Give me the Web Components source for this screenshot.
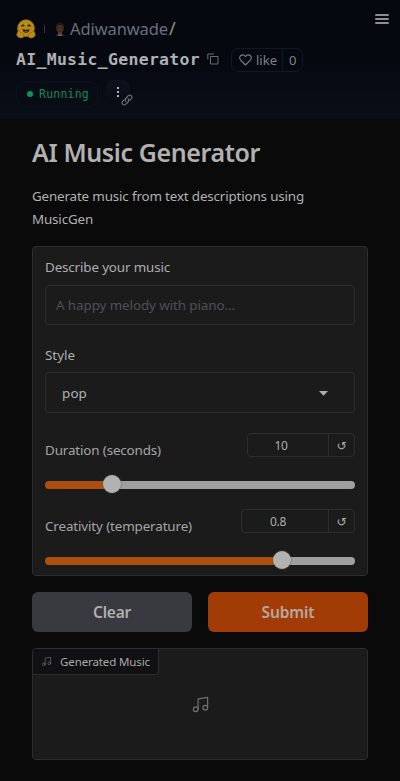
<!DOCTYPE html>
<html lang="en">
<head>
<meta charset="utf-8">
<title>AI Music Generator</title>
<style>
html{background:#0a0a0b}
body{margin:0;background:#0a0a0b;font-family:"Noto Sans",sans-serif;color:#b3b3b4;overflow:hidden}
</style>
</head>
<body>
<music-app></music-app>
<script>
const define = (name, html, setup) => customElements.define(name, class extends HTMLElement {
  connectedCallback() {
    if (this.shadowRoot) return;
    const root = this.attachShadow({mode: 'open'});
    root.innerHTML = html;
    if (setup) setup(this, root);
  }
});

// Text whose tracking adjusts so that it fills the width in its w attribute.
define('fit-text', `<style>
  :host{display:block;white-space:nowrap;flex:none}
  span{display:inline-block}
</style><span><slot></slot></span>`, (el, root) => {
  const w = +el.getAttribute('w'), s = root.querySelector('span');
  el.style.width = w + 'px';
  s.style.letterSpacing = (w - s.getBoundingClientRect().width) / el.textContent.length + 'px';
});

define('note-icon', `<style>:host{display:block;flex:none}svg{display:block;width:100%;height:100%}</style>
<svg viewBox="0 0 24 24" fill="none" stroke="currentColor" stroke-width="1.5" stroke-linecap="round" stroke-linejoin="round"><path d="M9 18V5l12-2v13"/><circle cx="6" cy="18" r="3"/><circle cx="18" cy="16" r="3"/></svg>`);

define('hub-logo', `<style>:host{display:block;width:20px;height:20px;flex:none}svg{display:block;overflow:visible}</style>
<svg width="20" height="20" viewBox="0 0 20 20">
<circle cx="10" cy="9.2" r="8.4" fill="#b78c16" stroke="#a06f0c" stroke-width=".8"/>
<path d="M5.8 7q1.200-1.400 2.200-.2M12 6.800q1.200-1.200 2.200.2" fill="none" stroke="#2b210f" stroke-width="1.300" stroke-linecap="round"/>
<path d="M6.500 10q3.500 1.400 7 0q-.3 3.800-3.500 3.800t-3.500-3.800" fill="#32200f"/><path d="M8 12.600q2-1.600 4 0q-2 1.600-4 0" fill="#a72e2c"/>
<path d="M2 12.300q1.200-.4 2 1l1.700.2q2.500 1.200 2.200 3.600q-.5 2.200-3.500 1.800Q1 18.500.7 15.500z" fill="#b98c18" stroke="#996409" stroke-width=".7"/>
<path d="M18 12.300q-1.200-.4-2 1l-1.700.2q-2.500 1.200-2.200 3.600q.5 2.200 3.500 1.800q3.400-.4 3.700-3.400z" fill="#b98c18" stroke="#996409" stroke-width=".7"/>
</svg>`);

define('user-avatar', `<style>:host{display:block;width:14px;height:14px;flex:none}svg{display:block}</style>
<svg width="14" height="14" viewBox="0 0 14 14"><path d="M2.500 14q.5-2.400 3-2.800h3q2.500.4 3 2.800z" fill="#23262b"/><path d="M5 9h4v3.500L7 13.600l-2-1.100z" fill="#55402f"/><ellipse cx="7" cy="6" rx="3.700" ry="5" fill="#493123"/><path d="M3.200 5Q3 .5 7 .4t3.800 4.600Q9.500 3 7 3T3.200 5" fill="#24180f"/><path d="M4.600 5.800h1.600M7.800 5.800h1.600M5.600 9h2.800" stroke="#2c1c14"/><path d="M5 13.300h4" stroke="#777"/></svg>`);

define('space-header', `<style>
  :host{display:block;box-sizing:border-box;height:119px;padding:17px 11px 0 16px;background:linear-gradient(#05080e,#05080f 50%,#0a0e18)}
  .row{display:flex;align-items:center}
  .one{height:23px}
  .sep{width:1px;height:8px;background:#34373d;margin:0 8px 0 8px}
  .owner{font-size:16.500px;line-height:23px;color:#68707d;margin-left:3px;margin-top:-1px}
  .slash{font-size:18px;line-height:23px;color:#8e9094;margin:-1px 0 0 1px}
  .menu{margin:-19px 0 0 auto;display:grid;gap:2px}
  .menu i{width:14px;height:2px;background:#8b8d90;border-radius:1px}
  .two{height:24px;margin-top:8px}
  .name{font:bold 16.500px/24px "DejaVu Sans Mono",monospace;color:#aeb0b4}
  .copy{margin:-2px 0 0 7px;display:block}
  .like{box-sizing:border-box;display:flex;align-items:center;width:72px;height:24px;border:1px solid #101725;border-radius:7px;margin-left:12px;color:#7d828c;font-size:13px}
  .like svg{margin:0 4px 0 7px}
  .count{display:flex;align-items:center;justify-content:center;height:22px;flex:1;border-left:1px solid #101725;margin-left:5px}
  .three{height:26px;margin-top:9px}
  .run{box-sizing:border-box;display:flex;align-items:center;width:82px;height:26px;border:1px solid #0d121d;border-radius:9px;background:#080c15;padding-left:10px;color:#0b8b5c;font:11.500px/24px "DejaVu Sans Mono",monospace}
  .dot{width:6px;height:6px;border-radius:50%;background:#079562;margin-right:6px}
  .more{position:relative;width:24px;height:24px;border-radius:8px;background:linear-gradient(#0d121d,#080c14);margin:-4px 0 0 8px;display:grid;place-content:center;gap:2px}
  .more i{width:2px;height:2px;background:#b0b2b5}
  .link{position:absolute;left:14.500px;top:14px}
</style>
<div class="row one"><hub-logo></hub-logo><span class="sep"></span><user-avatar></user-avatar><fit-text class="owner" w="98">Adiwanwade</fit-text><span class="slash">/</span><div class="menu"><i></i><i></i><i></i></div></div>
<div class="row two"><fit-text class="name" w="184">AI_Music_Generator</fit-text>
<svg class="copy" width="12" height="12" fill="none" stroke="#6a6d74"><path d="M3.500 3.500h7.500v7.500h-7.500zM.8 6.500v-5.500h6.200"/></svg>
<div class="like"><svg width="13" height="12" viewBox="0 0 13 12" fill="none" stroke="#7d828c" stroke-width="1.100"><path d="M6.500 11 1.600 6.200Q-.2 3.500 1.600 1.700 4.200-.2 6.500 2.500 8.800-.2 11.400 1.700 13.200 3.500 11.400 6.200z"/></svg><fit-text w="21">like</fit-text><span class="count"><fit-text w="7">0</fit-text></span></div></div>
<div class="row three"><div class="run"><span class="dot"></span><fit-text w="50">Running</fit-text></div>
<div class="more"><i></i><i></i><i></i><svg class="link" width="12" height="12" viewBox="0 0 12 12" fill="none" stroke="#73767d" stroke-width="1.100" stroke-linecap="round"><path d="M5 7.300Q3.500 5.600 5 4l2.300-2.300q1.500-1.300 3 0 1.300 1.500 0 3L8.900 6.100M7 4.700Q8.500 6.400 7 8L4.700 10.300q-1.500 1.300-3 0-1.300-1.500 0-3L3.100 5.900"/></svg></div></div>`);

define('text-field', `<style>
  :host{display:block}
  .label{font-size:13.400px;line-height:20px;color:#adadae}
  .box{box-sizing:border-box;height:40px;border:1px solid #2d2d30;border-radius:4px;margin-top:8px;padding:0 10px;display:flex;align-items:center;font-size:13.400px;color:#505054}
</style><div class="label"><slot name="label"></slot></div><div class="box"><slot></slot></div>`);

define('select-field', `<style>
  :host{display:block}
  .label{font-size:13.400px;line-height:20px;color:#adadae}
  .box{box-sizing:border-box;height:41px;border:1px solid #2d2d30;border-radius:4px;margin-top:7px;padding:0 26px 0 16px;display:flex;align-items:center;justify-content:space-between;font-size:13.400px;color:#b2b2b3}
  svg{margin-top:2px}
</style><div class="label"><slot name="label"></slot></div><div class="box"><slot></slot><svg width="9" height="5"><path d="M0 0h9L4.500 4.800z" fill="#adadae"/></svg></div>`);

define('range-field', `<style>
  :host{display:block;height:57px}
  .head{display:flex;justify-content:space-between;align-items:flex-start;height:48px}
  .label{font-size:13.400px;line-height:20px;color:#a5a5a6;padding-top:7px}
  .num{box-sizing:border-box;display:flex;height:24px;border:1px solid #2d2d30;border-radius:4px;font-size:12px;line-height:24px;color:#aeaeaf}
  .val{display:flex;justify-content:center;box-sizing:border-box;padding-right:14px;height:22px}
  .reset{box-sizing:border-box;height:22px;width:26px;border-left:1px solid #2d2d30;text-align:center;font:12px/25px "DejaVu Sans",sans-serif}
  .track{height:8px;border-radius:4px;display:flex;align-items:center}
  .thumb{width:18px;height:18px;border-radius:50%;background:#b2b2b3;box-shadow:0 0 2px #555;margin-top:-2px}
</style>
<div class="head"><div class="label"><slot></slot></div><div class="num"><div class="val"><fit-text></fit-text></div><div class="reset">↺</div></div></div>
<div class="track"><div class="thumb"></div></div>`, (el, root) => {
  const at = el.getAttribute('at');
  root.querySelector('.val').style.width = el.getAttribute('boxw') - 28 + 'px';
  root.querySelector('.track').style.background = `linear-gradient(90deg,#ad500f ${at}px,#9f9fa0 ${at}px)`;
  root.querySelector('.thumb').style.marginLeft = at - 9 + 'px';
  const t = document.createElement('fit-text');
  t.setAttribute('w', el.getAttribute('valw'));
  t.textContent = el.getAttribute('value');
  root.querySelector('fit-text').replaceWith(t);
});

define('form-panel', `<style>:host{display:block;box-sizing:border-box;height:330px;border:1px solid #2d2d30;border-radius:4px;background:#1b1b1c;padding:10px 12px}</style><slot></slot>`);

define('action-button', `<style>
  :host{display:flex;align-items:center;justify-content:center;height:40px;border-radius:6px;background:#393a3f;color:#b0b0b1;font-weight:600;font-size:15.500px}
  :host([primary]){background:#a13c07;color:#b5a8a1}
</style><slot></slot>`);

define('audio-panel', `<style>
  :host{display:flex;position:relative;box-sizing:border-box;height:112px;border:1px solid #2d2d30;border-radius:4px;background:#1b1b1c;align-items:center;justify-content:center;color:#707073}
  .tag{position:absolute;left:0;top:0;box-sizing:border-box;display:flex;align-items:center;width:126px;height:26px;background:#111113;border:solid #2d2d30;border-width:0 1px 1px 0;border-radius:3px 0 4px 0;padding-left:8px;gap:8px;font-size:11.500px}
  .tag note-icon{width:11px;height:11px}
  .tag span{color:#a9a9aa}
  .big{width:19px;height:19px}
</style><div class="tag"><note-icon></note-icon><span><slot></slot></span></div><note-icon class="big"></note-icon>`);

define('music-app', `<style>
  :host{display:block;height:781px}
  main{padding:0 32px}
  h1{margin:0;padding-top:15px;font-size:25px;line-height:36px;font-weight:600;color:#b1b1b2}
  p{margin:15px 0 15px;font-size:13.400px;line-height:23px;color:#b1b1b2}
  text-field{margin-bottom:20px}
  select-field{margin-bottom:20px}
  range-field + range-field{margin-top:19px}
  .buttons{display:grid;grid-template-columns:1fr 1fr;gap:16px;margin:16px 0}
</style>
<space-header></space-header>
<main>
<h1><fit-text w="228">AI Music Generator</fit-text></h1>
<p><fit-text w="272">Generate music from text descriptions using</fit-text><fit-text w="61">MusicGen</fit-text></p>
<form-panel>
<text-field><fit-text slot="label" w="125">Describe your music</fit-text><fit-text w="179">A happy melody with piano...</fit-text></text-field>
<select-field><fit-text slot="label" w="30">Style</fit-text><fit-text w="25">pop</fit-text></select-field>
<range-field at="67" boxw="108" value="10" valw="13"><fit-text w="116">Duration (seconds)</fit-text></range-field>
<range-field at="237" boxw="114" value="0.8" valw="16"><fit-text w="147">Creativity (temperature)</fit-text></range-field>
</form-panel>
<div class="buttons"><action-button><fit-text w="38">Clear</fit-text></action-button><action-button primary><fit-text w="53">Submit</fit-text></action-button></div>
<audio-panel><fit-text w="90">Generated Music</fit-text></audio-panel>
</main>`);
</script>
</body>
</html>
